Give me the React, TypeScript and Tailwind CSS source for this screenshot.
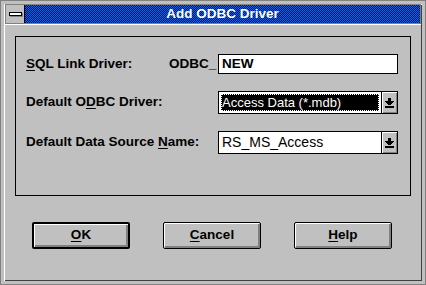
import React from "react";

function DropArrow() {
  return (
    <div className="w-[16px] h-full bg-[#c0c0c0] border-l border-black flex items-center justify-center shadow-[inset_1px_1px_0_#fff,inset_-1px_-1px_0_#808080]">
      <svg width="9" height="10" viewBox="0 0 9 10" shapeRendering="crispEdges">
        <rect x="3" y="0" width="3" height="3" fill="#000" />
        <rect x="0" y="3" width="9" height="1" fill="#000" />
        <rect x="1" y="4" width="7" height="1" fill="#000" />
        <rect x="2" y="5" width="5" height="1" fill="#000" />
        <rect x="3" y="6" width="3" height="1" fill="#000" />
        <rect x="0" y="8" width="9" height="2" fill="#000" />
      </svg>
    </div>
  );
}

function Btn({ label, ul, isDefault }: { label: string; ul: number; isDefault?: boolean }) {
  return (
    <div
      className={`w-[98px] h-[27px] rounded-[2px] bg-[#c0c0c0] flex items-center justify-center ${
        isDefault ? "border-2 border-black" : "border border-black"
      } shadow-[inset_1px_1px_0_#fff,inset_-2px_-2px_0_#808080]`}
    >
      <span>
        {label.slice(0, ul)}
        <span className="underline underline-offset-2">{label[ul]}</span>
        {label.slice(ul + 1)}
      </span>
    </div>
  );
}

export default function App() {
  let font = "font-['Liberation_Sans',Arial,sans-serif] font-bold text-[13.5px] text-black";
  return (
    <div className={`w-[426px] h-[285px] bg-[#c0c0c0] border border-[#808080] ${font}`}>
      <div className="w-full h-full border-[3px] border-[#c0c0c0] shadow-[inset_1px_1px_0_#fff,inset_-1px_-1px_0_#404040] flex flex-col">
        <div className="flex h-[20px] border border-[#808080] mx-[1px]">
          <div className="w-[19px] h-full bg-[#c0c0c0] border-r border-black flex items-center justify-center">
            <div className="w-[13px] h-[4px] bg-white border border-black shadow-[1px_1px_0_#808080]" />
          </div>
          <div className="flex-1 h-full flex items-center justify-center text-white text-[13.5px] bg-[repeating-conic-gradient(#000080_0_25%,#0070d0_0_50%)] bg-[length:2px_2px]">
            Add ODBC Driver
          </div>
        </div>
        <div className="h-[1px] bg-white mx-[1px]" />
        <div className="flex-1 px-[11px] pt-[11px]">
          <div className="border border-black w-[396px] h-[160px] pl-[10px] pt-[17px] flex flex-col gap-[17px]">
            <div className="flex items-center h-[20px]">
              <div className="w-[143px]">
                <span className="underline underline-offset-2">S</span>QL Link Driver:
              </div>
              <div className="w-[49px]">ODBC_</div>
              <div className="w-[180px] h-[20px] bg-white border border-black pl-[3px] flex items-center">NEW</div>
            </div>
            <div className="flex items-center h-[23px]">
              <div className="w-[192px]">
                Default O<span className="underline underline-offset-2">D</span>BC Driver:
              </div>
              <div className="w-[180px] h-[23px] bg-white border border-black flex">
                <div className="flex-1 p-[2px]">
                  <div className="h-full bg-black text-white font-normal text-[13px] outline-1 outline-dotted outline-white -outline-offset-1 px-[1px] flex items-center">
                    Access Data (*.mdb)
                  </div>
                </div>
                <DropArrow />
              </div>
            </div>
            <div className="flex items-center h-[23px]">
              <div className="w-[192px]">
                Default Data Source <span className="underline underline-offset-2">N</span>ame:
              </div>
              <div className="w-[180px] h-[23px] bg-white border border-black flex">
                <div className="flex-1 pl-[3px] font-normal text-[14px] flex items-center">RS_MS_Access</div>
                <DropArrow />
              </div>
            </div>
          </div>
          <div className="flex gap-[33px] pl-[17px] pt-[26px]">
            <Btn label="OK" ul={0} isDefault />
            <Btn label="Cancel" ul={0} />
            <Btn label="Help" ul={0} />
          </div>
        </div>
      </div>
    </div>
  );
}
